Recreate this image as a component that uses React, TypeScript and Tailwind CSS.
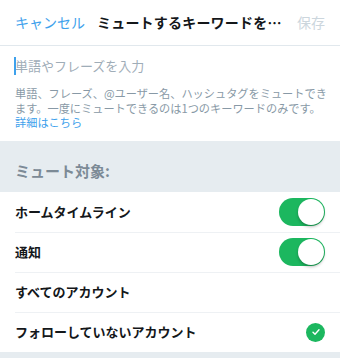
import React from 'react';

const font = { fontFamily: '"Noto Sans CJK JP", "Noto Sans", sans-serif' };

function Toggle() {
  return (
    <div className="w-[46px] h-[28px] rounded-full bg-[#1cb75f] flex items-center justify-end pr-[1px]">
      <div className="w-[26px] h-[26px] rounded-full bg-white shadow-[0_2px_3px_rgba(0,0,0,0.25)]" />
    </div>
  );
}

function Check() {
  return (
    <div className="w-[19px] h-[19px] rounded-full bg-[#1cb75f] flex items-center justify-center">
      <svg width="10" height="10" viewBox="0 0 10 10" fill="none">
        <path d="M2 5.2l2 2 4-4.4" stroke="white" strokeWidth="1.4" strokeLinecap="round" strokeLinejoin="round" />
      </svg>
    </div>
  );
}

const rows: { label: string; right: 'toggle' | 'check' | null; inset: boolean }[] = [
  { label: 'ホームタイムライン', right: 'toggle', inset: false },
  { label: '通知', right: 'toggle', inset: true },
  { label: 'すべてのアカウント', right: null, inset: true },
  { label: 'フォローしていないアカウント', right: 'check', inset: true },
];

export default function App() {
  return (
    <div className="w-[340px] h-[358px] bg-[#e6ecf0] overflow-hidden" style={font}>
      {/* Header */}
      <div className="h-[46px] bg-white border-b border-[#e1e8ed] flex items-center px-[15px]">
        <span className="text-[14px] text-[#3ea1ec]">キャンセル</span>
        <span className="ml-[12px] text-[14px] font-bold text-[#14171a] tracking-[0.2px]">ミュートするキーワードを…</span>
        <span className="ml-auto text-[14px] text-[#ccd6dd]">保存</span>
      </div>

      {/* Input */}
      <div className="bg-white pl-[15px] pr-[4px] pt-[10px] pb-[11px]">
        <div className="flex items-center h-[20px] relative">
          <span className="absolute left-[-1px] top-[1px] w-[2px] h-[18px] bg-[#3ea1ec]" />
          <span className="text-[13px] text-[#9fadb8]">単語やフレーズを入力</span>
        </div>
        <div className="mt-[10px] text-[11.2px] leading-[14.5px] text-[#8899a6] whitespace-nowrap">
          <p>
            単語、フレーズ、@ユーザー名、ハッシュタグをミュートでき
            <br />
            ます。一度にミュートできるのは1つのキーワードのみです。
          </p>
          <p className="text-[#3ea1ec]">詳細はこちら</p>
        </div>
      </div>

      {/* Section header */}
      <div className="h-[51px] flex items-end px-[15px] pb-[9px]">
        <span className="text-[15px] font-bold text-[#7c8a96]">ミュート対象:</span>
      </div>

      {/* Rows */}
      <div className="bg-white">
        {rows.map((r, i) => (
          <div key={r.label} className={i === 0 ? '' : r.inset ? 'pl-[15px]' : ''}>
            <div
              className={`h-[40px] flex items-center pr-[15px] ${i === 0 ? 'pl-[15px]' : ''} ${
                i > 0 ? 'border-t border-[#eef1f4]' : ''
              }`}
            >
              <span className="text-[13px] font-bold text-[#14171a]">{r.label}</span>
              <div className="ml-auto">
                {r.right === 'toggle' && <Toggle />}
                {r.right === 'check' && <Check />}
              </div>
            </div>
          </div>
        ))}
      </div>
    </div>
  );
}
